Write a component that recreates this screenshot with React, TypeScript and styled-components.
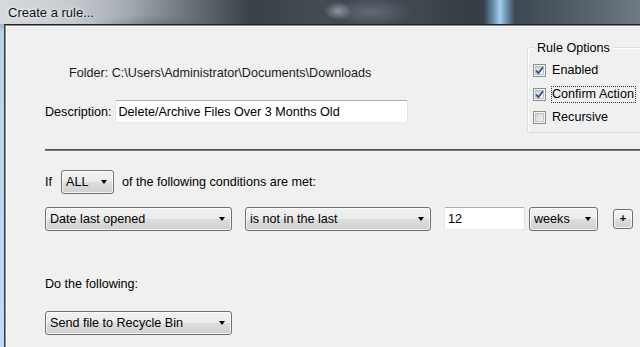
import React from "react";
import styled, { createGlobalStyle } from "styled-components";

const Global = createGlobalStyle`
  html, body { margin: 0; padding: 0; background: #f0f0f0; }
  body { font-family: "Liberation Sans", Arial, sans-serif; font-size: 12.6px; color: #000; }
  * { box-sizing: border-box; }
`;

const Window = styled.div`
  width: 640px;
  height: 347px;
  overflow: hidden;
  display: flex;
  flex-direction: column;
`;

const TitleBar = styled.div`
  height: 24px;
  flex: none;
  display: flex;
  align-items: center;
  padding-left: 8px;
  background:
    radial-gradient(ellipse 14px 9px at 338px 11px, rgba(225, 235, 245, 0.45), transparent),
    radial-gradient(ellipse 40px 14px at 372px 12px, rgba(160, 175, 190, 0.35), transparent),
    radial-gradient(ellipse 60px 16px at 150px 30px, rgba(40, 48, 56, 0.35), transparent),
    linear-gradient(90deg, transparent 484px, rgba(140, 200, 245, 0.55) 493px, rgba(170, 214, 246, 0.95) 500px, rgba(140, 200, 245, 0.55) 507px, transparent 515px),
    linear-gradient(90deg, #d6dadd 0px, #c6cbd0 70px, #a2a9b0 130px, #646c74 195px, #3a4148 250px, #434b53 320px, #3f474f 420px, #343c44 470px, #45505a 540px, #5c6772 600px, #6f7a84 640px);
`;

const TitleText = styled.span`
  font-family: "Liberation Sans", Arial, sans-serif;
  font-size: 13px;
  color: #111;
  text-shadow: 0 0 6px rgba(255, 255, 255, 0.9), 0 0 2px rgba(255, 255, 255, 0.8);
`;

const Frame = styled.div`
  flex: 1;
  display: flex;
  min-height: 0;
`;

const SideBorder = styled.div`
  width: 4px;
  flex: none;
  background: linear-gradient(180deg, #a9b2ba 0px, #b8d4ef 8px, #bddbf7 100%);
`;

const Client = styled.div`
  flex: 1;
  display: flex;
  flex-direction: column;
  background: #f0f0f0;
  border-top: 1px solid #1e2226;
  border-left: 1px solid #3c3c3c;
  box-shadow: inset 1px 1px 0 #8a8a8a, inset 2px 2px 0 #ffffff;
  padding-left: 40px;
  overflow: hidden;
`;

const TopSection = styled.div`
  display: flex;
  justify-content: space-between;
  align-items: flex-start;
`;

const LeftCol = styled.div`
  display: flex;
  flex-direction: column;
  padding-top: 40px;
`;

const FolderLine = styled.div`
  height: 16px;
  line-height: 16px;
  padding-left: 24px;
  color: #1a1a1a;
`;

const FieldRow = styled.div<{ $top?: number }>`
  display: flex;
  align-items: center;
  margin-top: ${(p) => p.$top ?? 0}px;
`;

const Label = styled.span<{ $gap?: number }>`
  line-height: 16px;
  margin-right: ${(p) => p.$gap ?? 0}px;
  white-space: nowrap;
`;

const TextInput = styled.div<{ $w: number; $h?: number }>`
  width: ${(p) => p.$w}px;
  height: ${(p) => p.$h ?? 23}px;
  background: #fff;
  border: 1px solid #e2e3ea;
  border-top-color: #abadb3;
  border-bottom-color: #e3e9ef;
  border-radius: 2px;
  display: flex;
  align-items: center;
  padding-left: 3px;
  white-space: nowrap;
  overflow: hidden;
`;

const GroupBox = styled.div`
  position: relative;
  margin-top: 22px;
  width: 130px;
  margin-right: -17px;
  flex: none;
  border: 1px solid #d5dfe5;
  border-radius: 3px;
  padding: 11px 0 2px 5px;
  box-shadow: inset 1px 1px 0 #fff;
`;

const Legend = styled.span`
  position: absolute;
  top: -8px;
  left: 6px;
  padding: 0 3px;
  background: #f0f0f0;
  line-height: 16px;
`;

const CheckRow = styled.div`
  height: 23.5px;
  display: flex;
  align-items: center;
  gap: 5px;
`;

const CheckText = styled.span<{ $focus?: boolean }>`
  line-height: 15px;
  padding: 0 1px 0 0;
  border: 1px dotted ${(p) => (p.$focus ? "#333" : "transparent")};
  white-space: nowrap;
`;

const Separator = styled.div`
  margin-top: 16px;
  height: 2px;
  border-top: 1px solid #505050;
  border-bottom: 1px solid #7c7c7c;
`;

const Combo = styled.div<{ $w: number }>`
  width: ${(p) => p.$w}px;
  height: 24px;
  flex: none;
  border: 1px solid #707070;
  border-radius: 3px;
  background: linear-gradient(180deg, #f2f2f2 0%, #ebebeb 48%, #dddddd 52%, #cfcfcf 100%);
  box-shadow: inset 0 0 0 1px rgba(255, 255, 255, 0.75);
  display: flex;
  align-items: center;
  justify-content: space-between;
  padding: 0 6px 0 4px;
  white-space: nowrap;
`;

const Arrow = styled.span`
  width: 0;
  height: 0;
  border-left: 3.5px solid transparent;
  border-right: 3.5px solid transparent;
  border-top: 4px solid #000;
`;

const PlusButton = styled.div`
  width: 20px;
  height: 20px;
  flex: none;
  border: 1px solid #707070;
  border-radius: 3px;
  background: linear-gradient(180deg, #f2f2f2 0%, #ebebeb 48%, #dddddd 52%, #cfcfcf 100%);
  box-shadow: inset 0 0 0 1px rgba(255, 255, 255, 0.75);
  display: flex;
  align-items: center;
  justify-content: center;
  font-weight: bold;
  font-size: 11px;
  line-height: 1;
`;

const ConditionRow = styled.div`
  display: flex;
  align-items: center;
  margin-top: 13px;
`;

const Spacer = styled.div<{ $w: number }>`
  width: ${(p) => p.$w}px;
  flex: none;
`;

const SectionLabel = styled.div<{ $top: number }>`
  margin-top: ${(p) => p.$top}px;
  line-height: 16px;
`;

const ActionRow = styled.div`
  margin-top: 19px;
  display: flex;
`;

const Checkbox: React.FC<{ checked?: boolean }> = ({ checked }) => (
  <svg width="13" height="13" viewBox="0 0 13 13" style={{ flex: "none" }}>
    <defs>
      <linearGradient id={checked ? "cbg1" : "cbg0"} x1="0" y1="0" x2="1" y2="1">
        <stop offset="0" stopColor="#cbcfd5" />
        <stop offset="1" stopColor="#f6f6f6" />
      </linearGradient>
    </defs>
    <rect x="0.5" y="0.5" width="12" height="12" fill="#f4f4f4" stroke="#8e8f8f" />
    <rect x="2.5" y="2.5" width="8" height="8" fill={`url(#${checked ? "cbg1" : "cbg0"})`} stroke="#b4b8bd" strokeWidth="0.8" />
    {checked && (
      <path d="M3.2 6.6 L5.3 9.2 L9.9 3.2" fill="none" stroke="#2d4a8c" strokeWidth="1.7" strokeLinejoin="miter" />
    )}
  </svg>
);

export default function App() {
  return (
    <>
      <Global />
      <Window>
        <TitleBar>
          <TitleText>Create a rule...</TitleText>
        </TitleBar>
        <Frame>
          <SideBorder />
          <Client>
            <TopSection>
              <LeftCol>
                <FolderLine>Folder: C:\Users\Administrator\Documents\Downloads</FolderLine>
                <FieldRow $top={19}>
                  <Label $gap={3}>Description:</Label>
                  <TextInput $w={293}>Delete/Archive Files Over 3 Months Old</TextInput>
                </FieldRow>
              </LeftCol>
              <GroupBox>
                <Legend>Rule Options</Legend>
                <CheckRow>
                  <Checkbox checked />
                  <CheckText>Enabled</CheckText>
                </CheckRow>
                <CheckRow>
                  <Checkbox checked />
                  <CheckText $focus>Confirm Action</CheckText>
                </CheckRow>
                <CheckRow>
                  <Checkbox />
                  <CheckText>Recursive</CheckText>
                </CheckRow>
              </GroupBox>
            </TopSection>
            <Separator />
            <FieldRow $top={19}>
              <Label $gap={9}>If</Label>
              <Combo $w={53}>
                <span>ALL</span>
                <Arrow />
              </Combo>
              <Label style={{ marginLeft: 8 }}>of the following conditions are met:</Label>
            </FieldRow>
            <ConditionRow>
              <Combo $w={187}>
                <span>Date last opened</span>
                <Arrow />
              </Combo>
              <Spacer $w={13} />
              <Combo $w={186}>
                <span>is not in the last</span>
                <Arrow />
              </Combo>
              <Spacer $w={13} />
              <TextInput $w={81} $h={23}>12</TextInput>
              <Spacer $w={4} />
              <Combo $w={69}>
                <span>weeks</span>
                <Arrow />
              </Combo>
              <Spacer $w={15} />
              <PlusButton>+</PlusButton>
            </ConditionRow>
            <SectionLabel $top={45}>Do the following:</SectionLabel>
            <ActionRow>
              <Combo $w={187}>
                <span>Send file to Recycle Bin</span>
                <Arrow />
              </Combo>
            </ActionRow>
          </Client>
        </Frame>
      </Window>
    </>
  );
}
